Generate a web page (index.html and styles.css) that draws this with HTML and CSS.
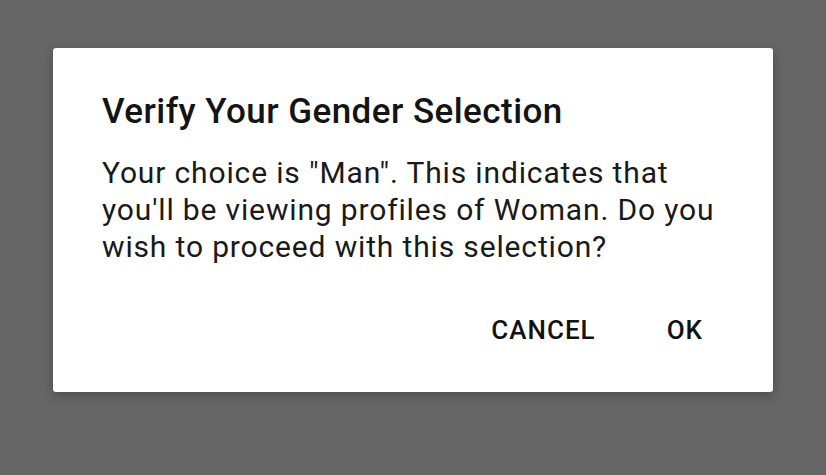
FILE: index.html
```html
<!DOCTYPE html>
<html>
<head>
<meta charset="utf-8">
<link rel="stylesheet" href="styles.css">
</head>
<body>
<div class="screen">
  <div class="dialog">
    <h1 class="title">Verify Your Gender Selection</h1>
    <p class="message">Your choice is "Man". This indicates that you'll be viewing profiles of Woman. Do you wish to proceed with this selection?</p>
    <div class="actions">
      <button class="btn">CANCEL</button>
      <button class="btn">OK</button>
    </div>
  </div>
</div>
</body>
</html>
```
FILE: styles.css
```css
html, body {
  margin: 0;
  padding: 0;
}
body {
  background: #666666;
  font-family: Roboto, "Noto Sans", sans-serif;
}
.screen {
  width: 826px;
  height: 475px;
  padding: 48px 53px 0 53px;
  box-sizing: border-box;
}
.dialog {
  background: #ffffff;
  border-radius: 3px;
  height: 344px;
  box-sizing: border-box;
  padding: 44px 40px 0 49px;
  box-shadow: 0 4px 12px rgba(0,0,0,0.25);
  display: flex;
  flex-direction: column;
}
.title {
  margin: 0;
  font-size: 35px;
  font-weight: 500;
  letter-spacing: 0.45px;
  color: #141414;
  line-height: 40px;
}
.message {
  margin: 22px 0 0 0;
  font-size: 30px;
  letter-spacing: 0.85px;
  line-height: 37px;
  color: #1a1a1a;
  max-width: 640px;
}
.actions {
  display: flex;
  justify-content: flex-end;
  margin-top: 43px;
  gap: 71px;
  padding-right: 30px;
}
.btn {
  background: none;
  border: none;
  font-family: Roboto, "Noto Sans", sans-serif;
  font-size: 26px;
  line-height: 28px;
  font-weight: 500;
  letter-spacing: 1px;
  color: #111111;
  padding: 8px 0;
}
```
